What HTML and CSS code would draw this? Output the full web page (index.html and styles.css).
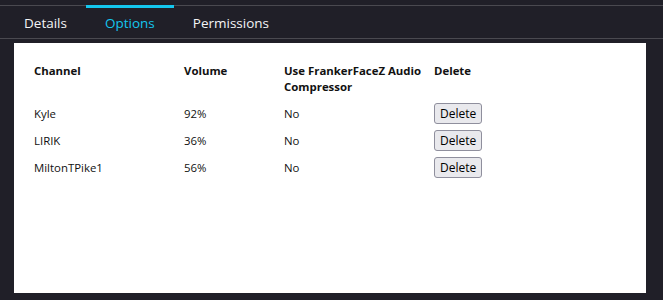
FILE: index.html
```html
<!doctype html>
<html lang="en">
<head>
  <meta charset="UTF-8">
  <meta name="viewport" content="width=device-width, initial-scale=1.0">
  <title>Channel options</title>
  <link rel="stylesheet" href="styles.css">
</head>

<body>
  <nav class="tabs">
    <a class="tab">Details</a>
    <a class="tab active">Options</a>
    <a class="tab">Permissions</a>
  </nav>

  <main class="panel">
    <table class="channels">
      <thead>
        <tr>
          <th class="col-channel">Channel</th>
          <th class="col-volume">Volume</th>
          <th class="col-comp">Use FrankerFaceZ Audio Compressor</th>
          <th>Delete</th>
        </tr>
      </thead>
      <tbody>
        <tr>
          <td>Kyle</td>
          <td>92%</td>
          <td>No</td>
          <td><button>Delete</button></td>
        </tr>
        <tr>
          <td>LIRIK</td>
          <td>36%</td>
          <td>No</td>
          <td><button>Delete</button></td>
        </tr>
        <tr>
          <td>MiltonTPike1</td>
          <td>56%</td>
          <td>No</td>
          <td><button>Delete</button></td>
        </tr>
      </tbody>
    </table>
  </main>
</body>
</html>
```

FILE: styles.css
```css
*{
  box-sizing: border-box;
}

body{
  margin: 0;
  height: 300px;
  overflow: hidden;
  font-family: "Open Sans", "Noto Sans", Arial, sans-serif;
  background-color: #201f28;
}

.tabs{
  display: flex;
  margin-top: 5px;
  padding-left: 5px;
  height: 34px;
  border-top: 1px solid #4a4950;
  border-bottom: 1px solid #4a4950;
}

.tab{
  margin-top: -1px;
  padding: 0 19px;
  line-height: 31px;
  color: #f4f4f6;
  font-size: 13.5px;
  font-weight: 500;
  border-top: 3px solid transparent;
}

.tab.active{
  color: #14c6ee;
  border-top-color: #14c6ee;
}

.panel{
  margin: 4px 17px 0 14px;
  padding: 20px 20px;
  height: 250px;
  background: #fff;
}

.channels{
  border-collapse: collapse;
  color: #111;
  font-size: 11.4px;
  line-height: 16px;
}

.channels th{
  padding: 0 0 5px;
  text-align: left;
  vertical-align: top;
}

.channels td{
  padding: 3px 0;
  height: 27px;
}

.col-channel{
  width: 150px;
}

.col-volume{
  width: 100px;
}

.col-comp{
  width: 150px;
}

button{
  padding: 0 5px;
  height: 21px;
  font-family: inherit;
  font-size: 12px;
  color: #000;
  background: #e9e9ed;
  border: 1px solid #8f8f9d;
  border-radius: 3px;
}
```
